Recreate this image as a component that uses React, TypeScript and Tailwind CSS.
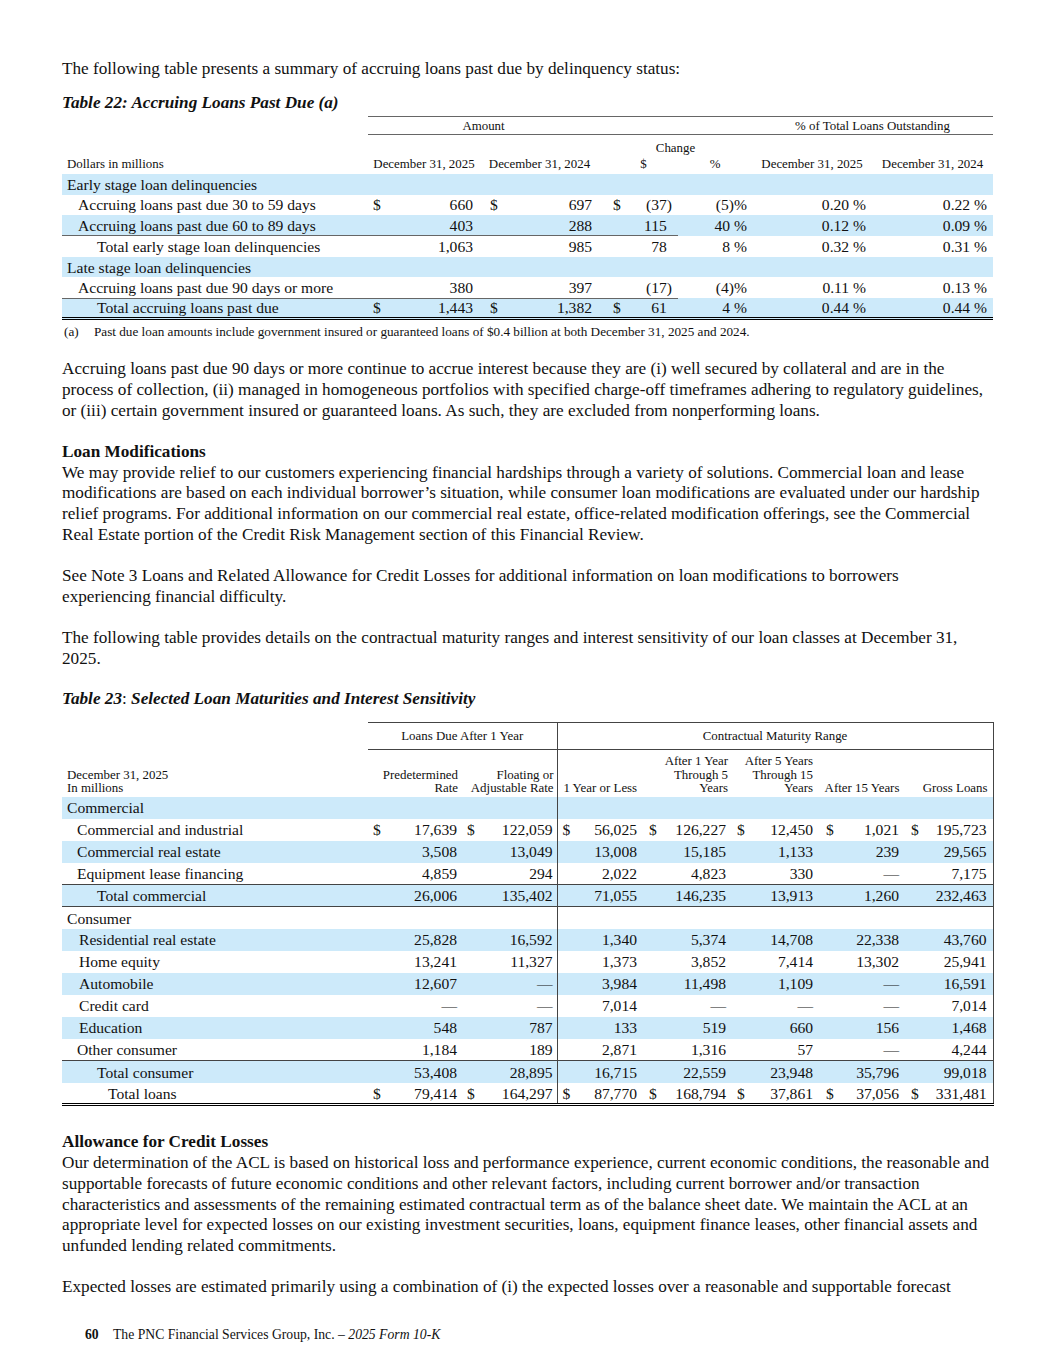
const serif = "font-['Liberation_Serif','Times_New_Roman',serif]";

type Cell = { d?: boolean; v: string; hang?: boolean };

type Row22 = {
  label: string;
  pad: string;
  blue: boolean;
  line?: boolean;
  last?: boolean;
  cells?: Cell[];
};

const rows22: Row22[] = [
  { label: "Early stage loan delinquencies", pad: "pl-[5px]", blue: true },
  {
    label: "Accruing loans past due 30 to 59 days",
    pad: "pl-[16px]",
    blue: false,
    cells: [{ d: true, v: "660" }, { d: true, v: "697" }, { d: true, v: "(37)" }, { v: "(5)%" }, { v: "0.20 %" }, { v: "0.22 %" }],
  },
  {
    label: "Accruing loans past due 60 to 89 days",
    pad: "pl-[16px]",
    blue: true,
    cells: [{ v: "403" }, { v: "288" }, { v: "115", hang: true }, { v: "40\u00a0%" }, { v: "0.12 %" }, { v: "0.09 %" }],
  },
  {
    label: "Total early stage loan delinquencies",
    pad: "pl-[35px]",
    blue: false,
    line: true,
    cells: [{ v: "1,063" }, { v: "985" }, { v: "78", hang: true }, { v: "8\u00a0%" }, { v: "0.32 %" }, { v: "0.31 %" }],
  },
  { label: "Late stage loan delinquencies", pad: "pl-[5px]", blue: true },
  {
    label: "Accruing loans past due 90 days or more",
    pad: "pl-[16px]",
    blue: false,
    cells: [{ v: "380" }, { v: "397" }, { v: "(17)" }, { v: "(4)%" }, { v: "0.11 %" }, { v: "0.13 %" }],
  },
  {
    label: "Total accruing loans past due",
    pad: "pl-[35px]",
    blue: true,
    line: true,
    last: true,
    cells: [{ d: true, v: "1,443" }, { d: true, v: "1,382" }, { d: true, v: "61", hang: true }, { v: "4\u00a0%" }, { v: "0.44 %" }, { v: "0.44 %" }],
  },
];

const pad22 = [
  "pl-[5px] pr-[7px]",
  "pl-[10px] pr-[7px]",
  "pl-[14px] pr-[6px]",
  "pl-[4px] pr-[5px]",
  "pl-[4px] pr-[6px]",
  "pl-[4px] pr-[6px]",
];

type Row23 = {
  label: string;
  pad: string;
  blue: boolean;
  top?: boolean;
  bottom?: boolean;
  last?: boolean;
  cells?: Cell[];
};

const dash = "\u2014";

const rows23: Row23[] = [
  { label: "Commercial", pad: "pl-[5px]", blue: true },
  {
    label: "Commercial and industrial",
    pad: "pl-[15px]",
    blue: false,
    cells: [
      { d: true, v: "17,639" }, { d: true, v: "122,059" }, { d: true, v: "56,025" }, { d: true, v: "126,227" },
      { d: true, v: "12,450" }, { d: true, v: "1,021" }, { d: true, v: "195,723" },
    ],
  },
  {
    label: "Commercial real estate",
    pad: "pl-[15px]",
    blue: true,
    cells: [{ v: "3,508" }, { v: "13,049" }, { v: "13,008" }, { v: "15,185" }, { v: "1,133" }, { v: "239" }, { v: "29,565" }],
  },
  {
    label: "Equipment lease financing",
    pad: "pl-[15px]",
    blue: false,
    cells: [{ v: "4,859" }, { v: "294" }, { v: "2,022" }, { v: "4,823" }, { v: "330" }, { v: dash }, { v: "7,175" }],
  },
  {
    label: "Total commercial",
    pad: "pl-[35px]",
    blue: true,
    top: true,
    bottom: true,
    cells: [{ v: "26,006" }, { v: "135,402" }, { v: "71,055" }, { v: "146,235" }, { v: "13,913" }, { v: "1,260" }, { v: "232,463" }],
  },
  { label: "Consumer", pad: "pl-[5px]", blue: false },
  {
    label: "Residential real estate",
    pad: "pl-[17px]",
    blue: true,
    cells: [{ v: "25,828" }, { v: "16,592" }, { v: "1,340" }, { v: "5,374" }, { v: "14,708" }, { v: "22,338" }, { v: "43,760" }],
  },
  {
    label: "Home equity",
    pad: "pl-[17px]",
    blue: false,
    cells: [{ v: "13,241" }, { v: "11,327" }, { v: "1,373" }, { v: "3,852" }, { v: "7,414" }, { v: "13,302" }, { v: "25,941" }],
  },
  {
    label: "Automobile",
    pad: "pl-[17px]",
    blue: true,
    cells: [{ v: "12,607" }, { v: dash }, { v: "3,984" }, { v: "11,498" }, { v: "1,109" }, { v: dash }, { v: "16,591" }],
  },
  {
    label: "Credit card",
    pad: "pl-[17px]",
    blue: false,
    cells: [{ v: dash }, { v: dash }, { v: "7,014" }, { v: dash }, { v: dash }, { v: dash }, { v: "7,014" }],
  },
  {
    label: "Education",
    pad: "pl-[17px]",
    blue: true,
    cells: [{ v: "548" }, { v: "787" }, { v: "133" }, { v: "519" }, { v: "660" }, { v: "156" }, { v: "1,468" }],
  },
  {
    label: "Other consumer",
    pad: "pl-[15px]",
    blue: false,
    cells: [{ v: "1,184" }, { v: "189" }, { v: "2,871" }, { v: "1,316" }, { v: "57" }, { v: dash }, { v: "4,244" }],
  },
  {
    label: "Total consumer",
    pad: "pl-[35px]",
    blue: true,
    top: true,
    cells: [{ v: "53,408" }, { v: "28,895" }, { v: "16,715" }, { v: "22,559" }, { v: "23,948" }, { v: "35,796" }, { v: "99,018" }],
  },
  {
    label: "Total loans",
    pad: "pl-[46px]",
    blue: false,
    last: true,
    cells: [
      { d: true, v: "79,414" }, { d: true, v: "164,297" }, { d: true, v: "87,770" }, { d: true, v: "168,794" },
      { d: true, v: "37,861" }, { d: true, v: "37,056" }, { d: true, v: "331,481" },
    ],
  },
];

const pad23 = [
  "pl-[5px] pr-[4px]",
  "pl-[6px] pr-[4px] border-r border-[#444]",
  "pl-[5px] pr-[6px]",
  "pl-[6px] pr-[5px]",
  "pl-[6px] pr-[6px]",
  "pl-[7px] pr-[6px]",
  "pl-[6px] pr-[6px] border-r border-[#444]",
];

function Lines({ lines, className = "" }: { lines: string[]; className?: string }) {
  return (
    <div className={className}>
      {lines.map((l, i) => (
        <div key={i} className="whitespace-nowrap">
          {l}
        </div>
      ))}
    </div>
  );
}

function Num({ c }: { c: Cell }) {
  return (
    <div className="flex justify-between whitespace-nowrap">
      <span>{c.d ? "$" : ""}</span>
      <span>
        {c.v}
        {c.hang && <span className="invisible">)</span>}
      </span>
    </div>
  );
}

function Table22() {
  return (
    <table className="w-[931px] table-fixed border-collapse">
      <colgroup>
        <col className="w-[306px]" />
        <col className="w-[112px]" />
        <col className="w-[119px]" />
        <col className="w-[79px]" />
        <col className="w-[74px]" />
        <col className="w-[120px]" />
        <col className="w-[121px]" />
      </colgroup>
      <thead className="text-[12.9px] leading-[14px]">
        <tr className="h-[18px]">
          <th />
          <th colSpan={2} className="border-y border-[#666] font-normal text-center">
            Amount
          </th>
          <th colSpan={2} className="border-y border-[#666]" />
          <th colSpan={2} className="border-y border-[#666] font-normal text-center">
            % of Total Loans Outstanding
          </th>
        </tr>
        <tr className="h-[20px]">
          <th />
          <th />
          <th />
          <th colSpan={2} className="font-normal text-center align-bottom">
            Change
          </th>
          <th />
          <th />
        </tr>
        <tr className="h-[19px]">
          <th className="font-normal text-left pl-[5px] align-middle">Dollars in millions</th>
          <th className="font-normal text-center whitespace-nowrap">December 31, 2025</th>
          <th className="font-normal text-center whitespace-nowrap">December 31, 2024</th>
          <th className="font-normal text-center pl-[10px]">$</th>
          <th className="font-normal text-center">%</th>
          <th className="font-normal text-center whitespace-nowrap">December 31, 2025</th>
          <th className="font-normal text-center whitespace-nowrap">December 31, 2024</th>
        </tr>
      </thead>
      <tbody className="text-[15.6px] leading-[17px]">
        {rows22.map((r, i) => (
          <tr
            key={i}
            className={`h-[20.7px] ${r.blue ? "bg-[#cdeafa]" : ""} ${r.last ? "border-b-[3px] border-double border-black" : ""}`}
          >
            <td className={`${r.pad} whitespace-nowrap ${r.line ? "border-t border-[#666]" : ""}`}>{r.label}</td>
            {r.cells
              ? r.cells.map((c, j) => (
                  <td key={j} className={`${pad22[j]} ${r.line && j < 3 ? "border-t border-[#666]" : ""}`}>
                    <Num c={c} />
                  </td>
                ))
              : [0, 1, 2, 3, 4, 5].map((j) => <td key={j} />)}
          </tr>
        ))}
      </tbody>
    </table>
  );
}

function Table23() {
  return (
    <table className="w-[931px] table-fixed border-collapse">
      <colgroup>
        <col className="w-[306px]" />
        <col className="w-[93px]" />
        <col className="w-[96px]" />
        <col className="w-[86px]" />
        <col className="w-[88px]" />
        <col className="w-[88px]" />
        <col className="w-[86px]" />
        <col className="w-[88px]" />
      </colgroup>
      <thead className="text-[12.9px] leading-[13.5px]">
        <tr className="h-[27px]">
          <th />
          <th colSpan={2} className="border-y border-r border-[#444] font-normal text-center align-middle">
            Loans Due After 1 Year
          </th>
          <th colSpan={5} className="border-y border-r border-[#444] font-normal text-center align-middle">
            Contractual Maturity Range
          </th>
        </tr>
        <tr className="h-[47px]">
          <th className="font-normal text-left align-bottom pl-[5px] pb-[1px]">
            December 31, 2025
            <br />
            In millions
          </th>
          <th className="font-normal text-right align-bottom pr-[3px] pb-[1px]">
            Predetermined
            <br />
            Rate
          </th>
          <th className="font-normal text-right align-bottom pr-[3px] pb-[1px] border-r border-[#444] whitespace-nowrap">
            Floating or
            <br />
            Adjustable Rate
          </th>
          <th className="font-normal text-center align-bottom pb-[1px] whitespace-nowrap">1 Year or Less</th>
          <th className="font-normal text-right align-bottom pr-[3px] pb-[1px] whitespace-nowrap">
            After 1 Year
            <br />
            Through 5
            <br />
            Years
          </th>
          <th className="font-normal text-right align-bottom pr-[6px] pb-[1px] whitespace-nowrap">
            After 5 Years
            <br />
            Through 15
            <br />
            Years
          </th>
          <th className="font-normal text-center align-bottom pb-[1px] whitespace-nowrap">After 15 Years</th>
          <th className="font-normal text-right align-bottom pr-[5px] pb-[1px] border-r border-[#444] whitespace-nowrap">
            Gross Loans
          </th>
        </tr>
      </thead>
      <tbody className="text-[15.6px] leading-[17px]">
        {rows23.map((r, i) => (
          <tr
            key={i}
            className={`h-[22px] ${r.blue ? "bg-[#cdeafa]" : ""} ${r.top ? "border-t border-[#444]" : ""} ${
              r.bottom ? "border-b border-[#444]" : ""
            } ${r.last ? "border-b-[3px] border-double border-black" : ""}`}
          >
            <td className={`${r.pad} whitespace-nowrap`}>{r.label}</td>
            {r.cells
              ? r.cells.map((c, j) => (
                  <td key={j} className={pad23[j]}>
                    <Num c={c} />
                  </td>
                ))
              : [0, 1, 2, 3, 4, 5, 6].map((j) => <td key={j} className={pad23[j]} />)}
          </tr>
        ))}
      </tbody>
    </table>
  );
}

export default function App() {
  return (
    <div className={`${serif} bg-white text-[#111] w-[1055px] min-h-[1365px]`}>
      <div className="w-[931px] ml-[62px] pt-[59px] text-[17.2px] leading-[20.7px]">
        <Lines lines={["The following table presents a summary of accruing loans past due by delinquency status:"]} />

        <div className="mt-[13px] font-bold italic">Table 22: Accruing Loans Past Due (a)</div>

        <div className="mt-[3px]">
          <Table22 />
        </div>

        <div className="mt-[5px] flex text-[13.2px] leading-[14px] whitespace-nowrap">
          <span className="w-[32px] pl-[2px]">(a)</span>
          <span>
            Past due loan amounts include government insured or guaranteed loans of $0.4 billion at both December 31, 2025 and 2024.
          </span>
        </div>

        <Lines
          className="mt-[20px]"
          lines={[
            "Accruing loans past due 90 days or more continue to accrue interest because they are (i) well secured by collateral and are in the",
            "process of collection, (ii) managed in homogeneous portfolios with specified charge-off timeframes adhering to regulatory guidelines,",
            "or (iii) certain government insured or guaranteed loans. As such, they are excluded from nonperforming loans.",
          ]}
        />

        <div className="mt-[20.7px] font-bold">Loan Modifications</div>
        <Lines
          lines={[
            "We may provide relief to our customers experiencing financial hardships through a variety of solutions. Commercial loan and lease",
            "modifications are based on each individual borrower\u2019s situation, while consumer loan modifications are evaluated under our hardship",
            "relief programs. For additional information on our commercial real estate, office-related modification offerings, see the Commercial",
            "Real Estate portion of the Credit Risk Management section of this Financial Review.",
          ]}
        />

        <Lines
          className="mt-[20.7px]"
          lines={[
            "See Note 3 Loans and Related Allowance for Credit Losses for additional information on loan modifications to borrowers",
            "experiencing financial difficulty.",
          ]}
        />

        <Lines
          className="mt-[20.7px]"
          lines={[
            "The following table provides details on the contractual maturity ranges and interest sensitivity of our loan classes at December 31,",
            "2025.",
          ]}
        />

        <div className="mt-[19px]">
          <span className="font-bold italic">Table 23</span>: <span className="font-bold italic">Selected Loan Maturities and Interest Sensitivity</span>
        </div>

        <div className="mt-[13px]">
          <Table23 />
        </div>

        <div className="mt-[26px] font-bold">Allowance for Credit Losses</div>
        <Lines
          lines={[
            "Our determination of the ACL is based on historical loss and performance experience, current economic conditions, the reasonable and",
            "supportable forecasts of future economic conditions and other relevant factors, including current borrower and/or transaction",
            "characteristics and assessments of the remaining estimated contractual term as of the balance sheet date. We maintain the ACL at an",
            "appropriate level for expected losses on our existing investment securities, loans, equipment finance leases, other financial assets and",
            "unfunded lending related commitments.",
          ]}
        />

        <Lines
          className="mt-[20.7px]"
          lines={["Expected losses are estimated primarily using a combination of (i) the expected losses over a reasonable and supportable forecast"]}
        />

        <div className="mt-[29px] flex items-baseline text-[13.7px] leading-[16px] whitespace-nowrap">
          <span className="ml-[23px] w-[28px] font-bold">60</span>
          <span>
            The PNC Financial Services Group, Inc. {"\u2013"} <span className="italic">2025 Form 10-K</span>
          </span>
        </div>
      </div>
    </div>
  );
}
